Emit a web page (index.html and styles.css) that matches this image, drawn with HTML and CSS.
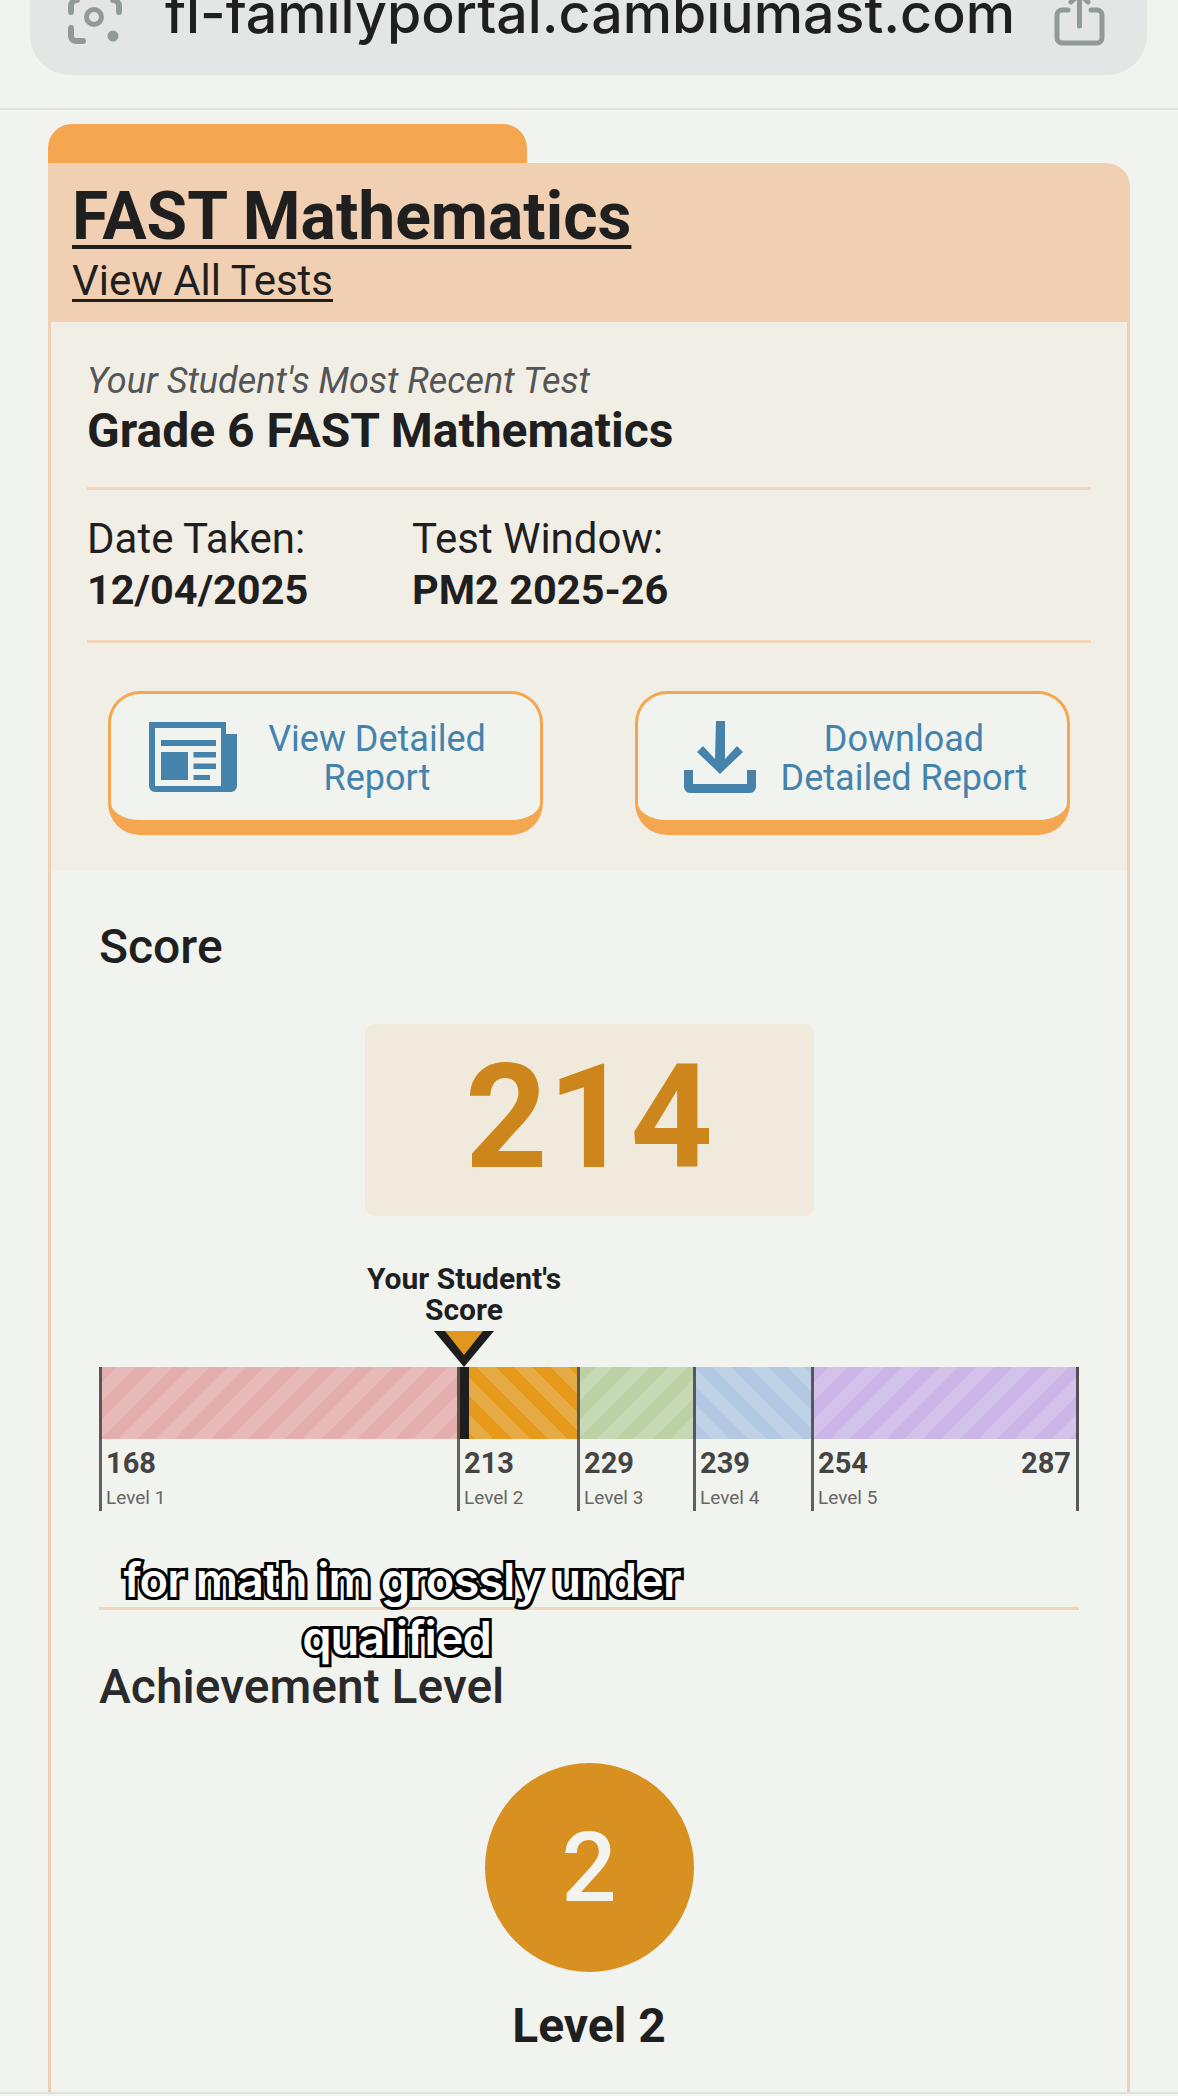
FILE: index.html
```html
<!DOCTYPE html>
<html lang="en">
<head>
  <meta charset="UTF-8">
  <title>FAST Mathematics</title>
  <link rel="stylesheet" href="styles.css">
</head>
<body>
  <div class="browser-bar">
    <div class="url-pill">
      <svg class="lens-icon" viewBox="0 0 54 44" width="54" height="44" fill="none" stroke="#929a98" stroke-width="6" stroke-linecap="round">
        <path d="M3 12V6a6 6 0 0 1 6-6M51 12V6a6 6 0 0 0-6-6M3 28v8a5 5 0 0 0 5 5h7"/>
        <circle cx="26" cy="17" r="7.5" stroke-width="5"/>
        <circle cx="45" cy="36" r="5.5" fill="#929a98" stroke="none"/>
      </svg>
      <span class="url-text">fl-familyportal.cambiumast.com</span>
      <svg class="share-icon" viewBox="0 0 51 46" width="51" height="46" fill="none" stroke="#929a98" stroke-width="5" stroke-linecap="round">
        <path d="M14 10H8a5 5 0 0 0-5 5v23a5 5 0 0 0 5 5h35a5 5 0 0 0 5-5V15a5 5 0 0 0-5-5h-6"/>
        <path d="M25.5 -5v31M17 2l8.500-8 8.500 8"/>
      </svg>
    </div>
  </div>

  <div class="card">
    <div class="card-tab"></div>
    <header class="card-header">
      <a class="title-link">FAST Mathematics</a>
      <a class="all-tests">View All Tests</a>
    </header>

    <div class="card-body">
      <section class="summary">
        <p class="recent-label">Your Student's Most Recent Test</p>
        <p class="recent-test">Grade 6 FAST Mathematics</p>
        <div class="test-meta">
          <div class="meta-col">
            <div class="meta-label">Date Taken:</div>
            <div class="meta-value">12/04/2025</div>
          </div>
          <div class="meta-col">
            <div class="meta-label">Test Window:</div>
            <div class="meta-value">PM2 2025-26</div>
          </div>
        </div>
        <div class="actions">
          <a class="report-btn">
            <svg viewBox="0 0 88 70" width="88" height="70" fill="#4583ad">
              <path fill-rule="evenodd" d="M0 0H77V12H88V64a6 6 0 0 1-6 6H6a6 6 0 0 1-6-6ZM6 6V64H72V6Z"/>
              <path d="M12 18h55v6H12zM12 30h27v28H12zM44.500 30H67v5.500H44.500zM44.500 41.500H67v5.500H44.500zM44.500 53H61v5H44.500z"/>
            </svg>
            <span class="btn-text">View Detailed<br>Report</span>
          </a>
          <a class="report-btn download">
            <svg viewBox="0 0 72 72" width="72" height="72" fill="#4583ad">
              <path d="M32 0h9v38l12-13 6 6-23 22-23-22 6-6 12 13z"/>
              <path d="M0 49h9v14h54V49h9v17a6 6 0 0 1-6 6H6a6 6 0 0 1-6-6z"/>
            </svg>
            <span class="btn-text">Download<br>Detailed Report</span>
          </a>
        </div>
      </section>

      <section class="results">
        <h3 class="section-title">Score</h3>
        <div class="score-box">214</div>

        <div class="scale">
          <div class="marker">
            <div class="marker-label">Your Student's<br>Score</div>
            <svg class="marker-arrow" viewBox="0 0 60 36" width="60" height="36">
              <path d="M0 0H60L30 36Z" fill="#1e1e1e"/>
              <path d="M11 0H49L30 24Z" fill="#e0961f"/>
            </svg>
            <div class="marker-line"></div>
          </div>
          <div class="seg seg-1"><div class="band"></div><div class="seg-nums"><b>168</b></div><span>Level 1</span></div>
          <div class="seg seg-2"><div class="band"></div><div class="seg-nums"><b>213</b></div><span>Level 2</span></div>
          <div class="seg seg-3"><div class="band"></div><div class="seg-nums"><b>229</b></div><span>Level 3</span></div>
          <div class="seg seg-4"><div class="band"></div><div class="seg-nums"><b>239</b></div><span>Level 4</span></div>
          <div class="seg seg-5"><div class="band"></div><div class="seg-nums"><b>254</b><b>287</b></div><span>Level 5</span></div>
        </div>

        <hr class="divider">

        <h3 class="section-title achievement">Achievement Level</h3>
        <div class="level-circle">2</div>
        <div class="level-name">Level 2</div>
      </section>
    </div>
  </div>
  <div class="page-end"></div>

  <div class="caption">for math im grossly under<br>qualified&nbsp;</div>
</body>
</html>
```

FILE: styles.css
```css
* {
  box-sizing: border-box;
}
body {
  margin: 0;
  height: 2096px;
  overflow: hidden;
  position: relative;
  background: #f1f3ee;
  color: #1f1f1f;
  font-family: Roboto, "Liberation Sans", sans-serif;
}
p, h3 {
  margin: 0;
}
a {
  color: inherit;
}

/* browser chrome, cut off by the top of the screenshot */
.browser-bar {
  height: 110px;
  padding: 0 31px 0 30px;
  border-bottom: 2px solid #dfe1de;
}
.url-pill {
  display: flex;
  align-items: flex-start;
  height: 75px;
  padding: 0 42px 0 38px;
  background: #e3e6e4;
  border-radius: 0 0 40px 40px;
  overflow: hidden;
}
.url-text {
  margin: -17px 0 0 43px;
  font-family: Inter, sans-serif;
  font-size: 55.5px;
  font-weight: 500;
  line-height: 60px;
  white-space: nowrap;
}
.share-icon {
  margin-left: auto;
}

.card {
  margin: 14px 48px 0;
}
.card-tab {
  width: 479px;
  height: 39px;
  background: #f5a650;
  border-radius: 24px 24px 0 0;
}
.card-header {
  display: flex;
  flex-direction: column;
  align-items: flex-start;
  height: 159px;
  padding: 12px 24px 0;
  background: #f1cfb2;
  border-radius: 0 24px 0 0;
}
.title-link {
  font-size: 66px;
  font-weight: 700;
  line-height: 83px;
  text-decoration: underline;
  text-decoration-thickness: 4px;
  text-underline-offset: 6px;
}
.all-tests {
  font-size: 42px;
  line-height: 46px;
  text-decoration: underline;
  text-decoration-thickness: 3px;
  text-underline-offset: 4px;
}

.card-body {
  border-left: 3px solid #f1cfb2;
  border-right: 3px solid #f1cfb2;
  height: 1770px;
}
.summary {
  height: 549px;
  padding: 39px 36px 0;
  background: #f1eee6;
}
.recent-label {
  font-size: 36px;
  font-style: italic;
  line-height: 40px;
  color: #555;
}
.recent-test {
  margin-top: 4px;
  padding-bottom: 30px;
  font-size: 48px;
  font-weight: 700;
  line-height: 52px;
  border-bottom: 3px solid #f3d5bc;
}
.test-meta {
  display: flex;
  padding: 26px 0 26px;
  border-bottom: 3px solid #f3d5bc;
}
.meta-col {
  width: 325px;
}
.meta-label {
  font-size: 42px;
  line-height: 46px;
}
.meta-value {
  margin-top: 4px;
  font-size: 41.5px;
  font-weight: 700;
  line-height: 48px;
}
.actions {
  display: flex;
  justify-content: space-between;
  margin-top: 48px;
  padding: 0 21px;
}
.report-btn {
  display: flex;
  align-items: center;
  width: 435px;
  height: 144px;
  padding: 0 23px 0 38px;
  background: #f1f3ee;
  border: 3px solid #f5a650;
  border-bottom-width: 15px;
  border-radius: 32px;
  color: #4583ad;
}
.report-btn.download {
  padding: 0 15px 0 46px;
}
.report-btn svg {
  flex: none;
}
.btn-text {
  flex: 1;
  padding-top: 3px;
  font-size: 36px;
  line-height: 39px;
  text-align: center;
}

.results {
  padding: 50px 48px 0;
}
.section-title {
  font-size: 48px;
  font-weight: 500;
  line-height: 52px;
}
.score-box {
  display: flex;
  align-items: center;
  justify-content: center;
  width: 449px;
  height: 192px;
  margin: 51px auto 0;
  padding-bottom: 4px;
  background: #f0eadc;
  border-radius: 10px;
  color: #cc861c;
  font-size: 144px;
  font-weight: 700;
  line-height: 1;
}

.scale {
  display: flex;
  position: relative;
  margin-top: 151px;
}
.seg {
  position: relative;
  padding-bottom: 1px;
  color: #666;
  font-size: 19px;
  line-height: 24px;
}
.seg::before {
  content: "";
  position: absolute;
  top: 0;
  bottom: 0;
  left: 0;
  width: 3px;
  background: rgba(60, 60, 60, 0.8);
}
.seg > span {
  display: block;
  margin-top: 7px;
  padding-left: 7px;
}
.seg-nums {
  display: flex;
  justify-content: space-between;
  padding: 8px 8px 0 7px;
  color: #444;
  font-size: 29px;
  line-height: 32px;
}
.band {
  height: 72px;
}
.seg-1 {
  width: 358px;
}
.seg-2 {
  width: 120px;
}
.seg-3 {
  width: 116px;
}
.seg-4 {
  width: 118px;
}
.seg-5 {
  width: 268px;
}
.seg-5::after {
  content: "";
  position: absolute;
  top: 0;
  bottom: 0;
  right: 0;
  width: 3px;
  background: rgba(60, 60, 60, 0.85);
}
.seg-1 .band {
  background: repeating-linear-gradient(135deg, #e5aeae 0 13px, #e9baba 13px 26px);
}
.seg-2 .band {
  background: repeating-linear-gradient(45deg, #e59a1c 0 13px, #e6ab45 13px 26px);
}
.seg-3 .band {
  background: repeating-linear-gradient(135deg, #bcd2a6 0 13px, #c6d8b4 13px 26px);
}
.seg-4 .band {
  background: repeating-linear-gradient(45deg, #b2c8e3 0 13px, #bfd1e6 13px 26px);
}
.seg-5 .band {
  background: repeating-linear-gradient(135deg, #ccb6e8 0 13px, #d3c2ea 13px 26px);
}
.marker {
  position: absolute;
  left: 365px;
  top: -104px;
  width: 0;
  display: flex;
  flex-direction: column;
  align-items: center;
  z-index: 1;
}
.marker-label {
  flex: none;
  width: 240px;
  font-size: 30px;
  font-weight: 700;
  line-height: 31px;
  text-align: center;
}
.marker-arrow {
  flex: none;
  margin-top: 6px;
}
.marker-line {
  flex: none;
  width: 9px;
  height: 72px;
  background: #1e1e1e;
}

.divider {
  height: 3px;
  margin: 96px 0 0;
  border: none;
  background: #f3d5bc;
}
.achievement {
  margin-top: 51px;
  color: #2a2a2a;
}
.level-circle {
  display: flex;
  align-items: center;
  justify-content: center;
  width: 209px;
  height: 209px;
  margin: 50px auto 0;
  padding-top: 2px;
  background: #d89020;
  border-radius: 50%;
  color: #f2f4ef;
  font-size: 97px;
  font-weight: 500;
  line-height: 1;
}
.level-name {
  margin-top: 28px;
  font-size: 48px;
  font-weight: 700;
  line-height: 52px;
  text-align: center;
}

.page-end {
  border-top: 2px solid #dfe1de;
}

/* video caption lying over the page */
.caption {
  position: absolute;
  left: 102px;
  top: 1551px;
  width: 600px;
  color: #fff;
  font-family: Inter, sans-serif;
  font-size: 47px;
  font-weight: 600;
  line-height: 58px;
  letter-spacing: -1px;
  text-align: center;
  -webkit-text-stroke: 6px #000;
  paint-order: stroke fill;
}
```
